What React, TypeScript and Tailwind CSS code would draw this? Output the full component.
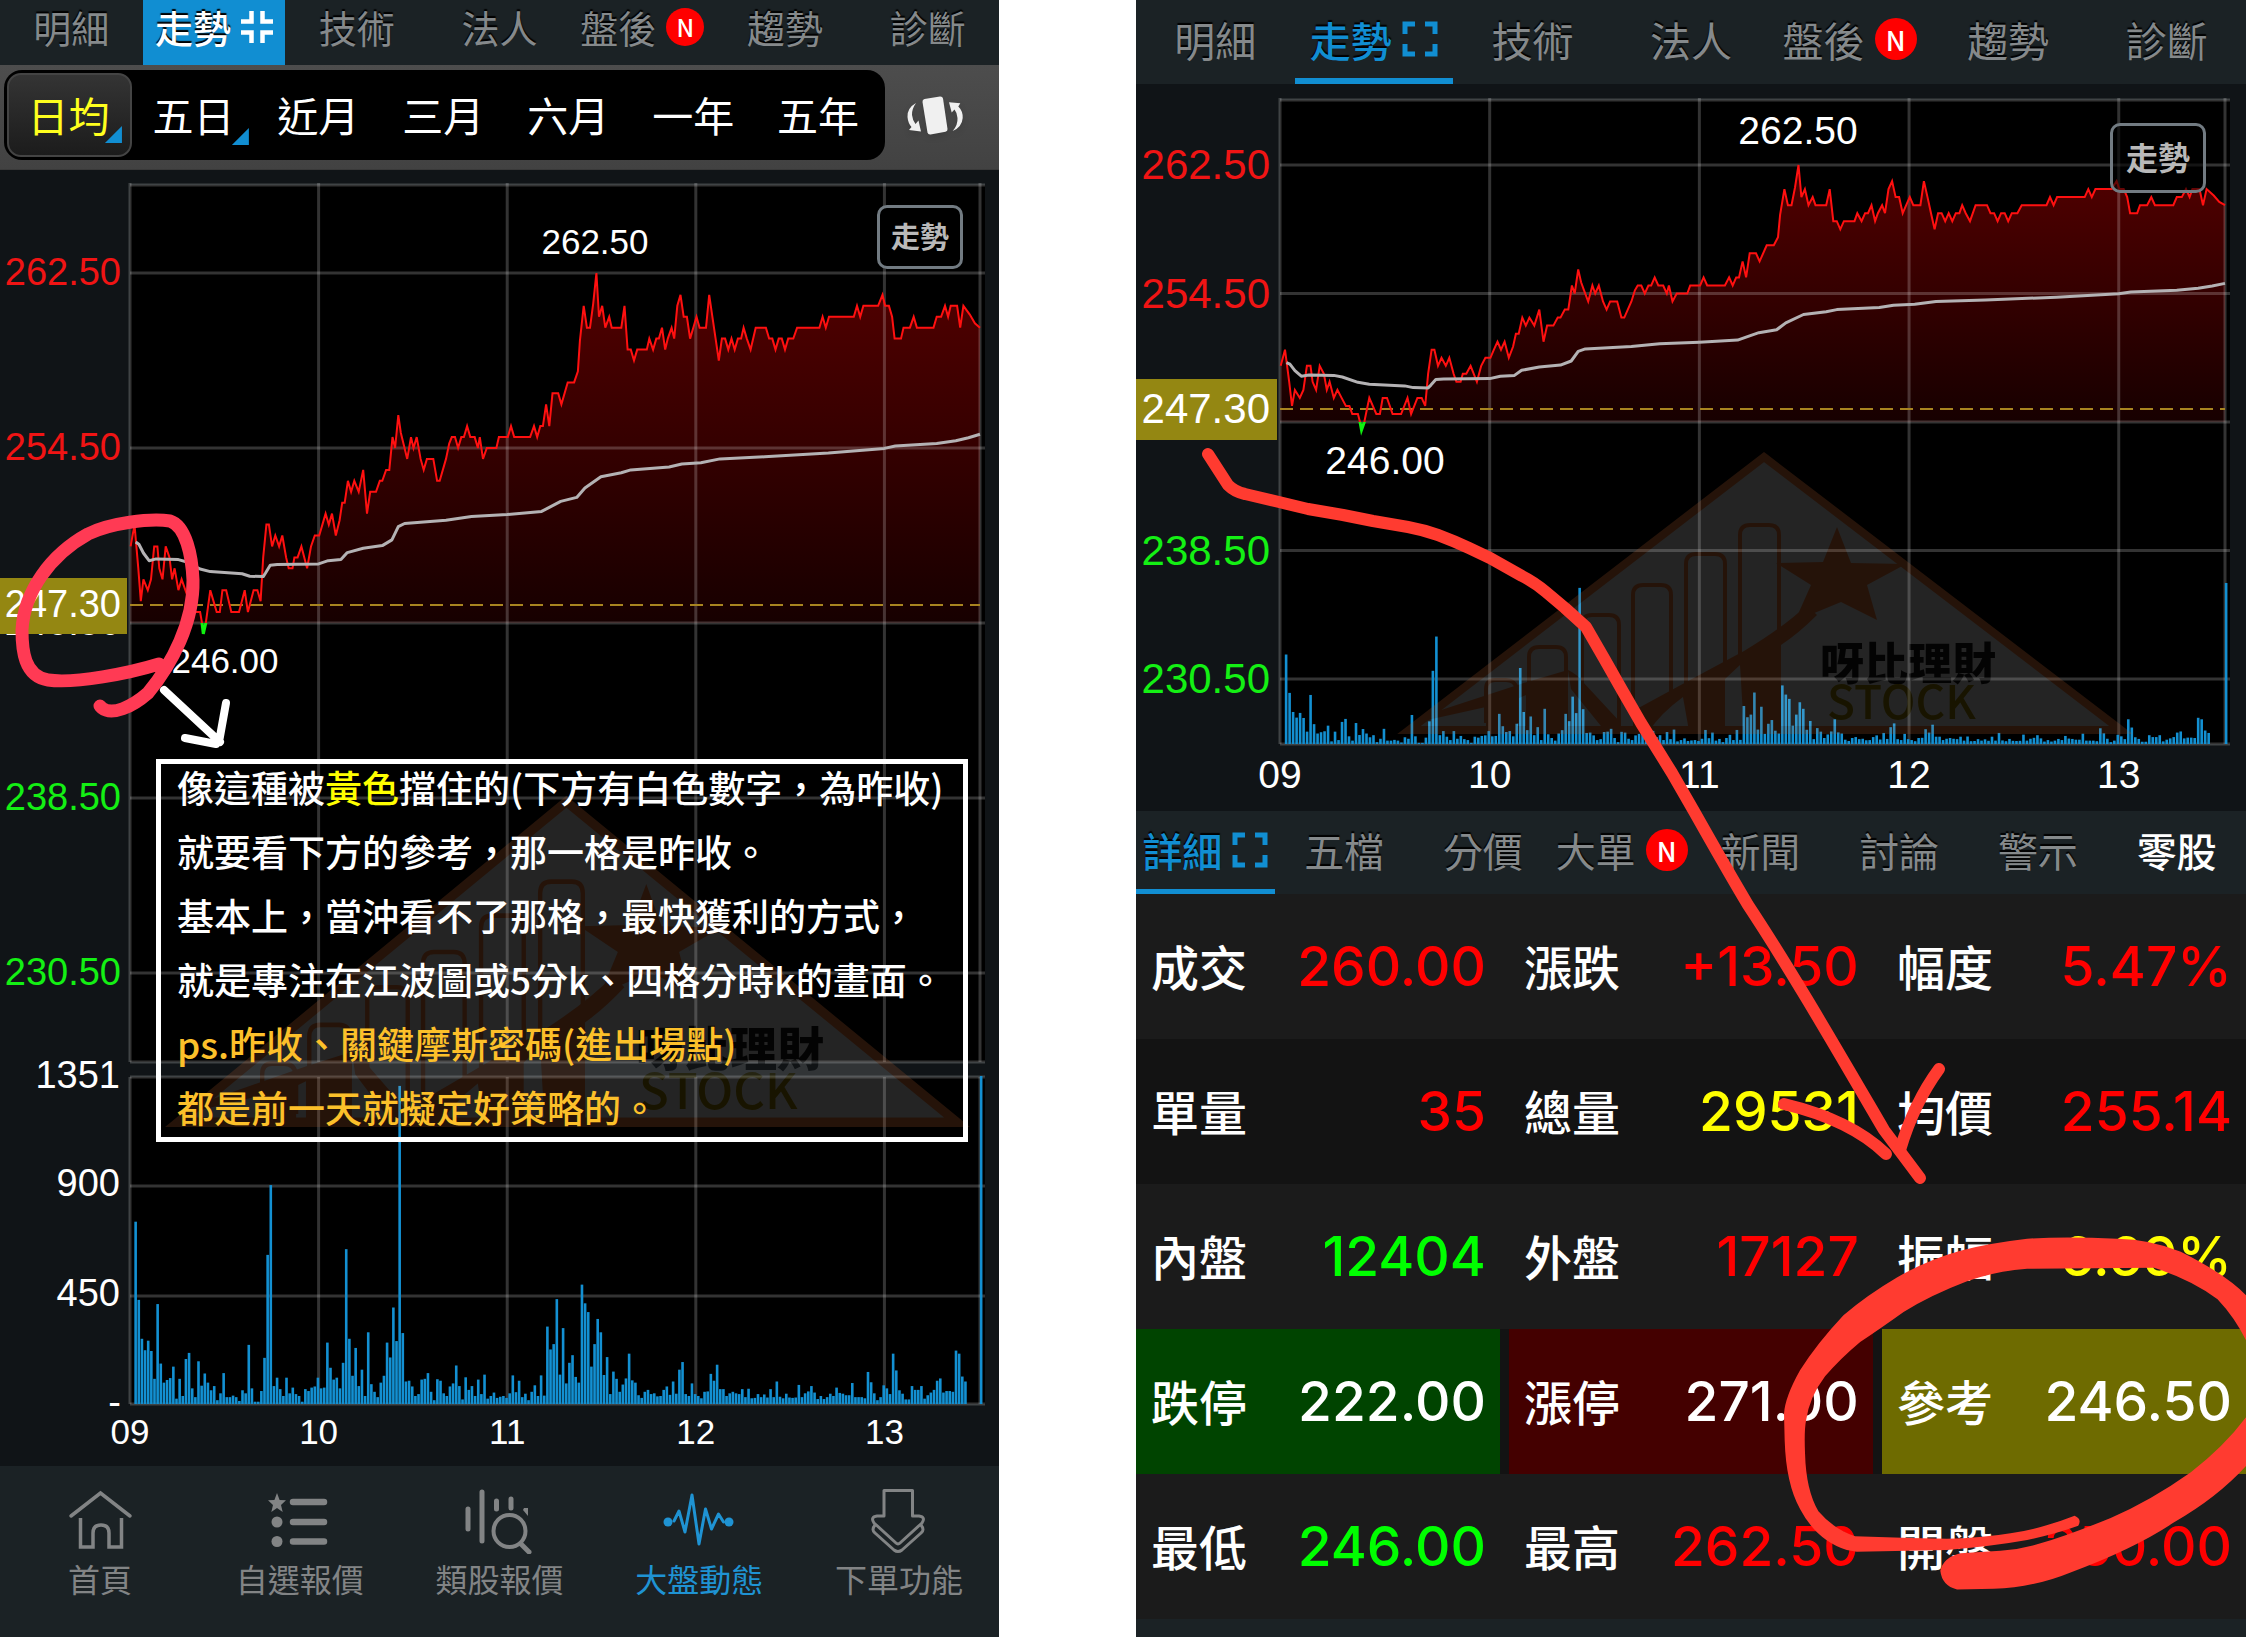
import type { ReactNode } from "react";

/* ---------- market data ---------- */

const TICKS_PER_HOUR = 296;
const SESSION_TICKS = 1334;

const PRICE: [number, number][] = [
  [1, 250], [7, 251], [13, 249], [17, 247.5], [21, 248.5], [28, 248], [33, 248.5], [38, 250], [43, 250], [46, 249],
  [51, 248.5], [56, 250], [62, 249.5], [66, 248.5], [70, 249], [76, 248], [81, 248.5], [87, 248], [93, 247.5], [98, 247.5],
  [102, 247], [110, 247], [113, 246.5], [115, 246], [119, 246.5], [126, 248], [131, 247.5], [136, 247], [141, 247], [145, 248],
  [151, 248], [159, 247], [171, 247], [180, 248], [185, 247], [194, 248], [200, 248], [205, 247.5], [209, 249.5], [214, 251],
  [218, 251], [223, 250], [228, 250.5], [234, 250], [239, 250.5], [245, 249.5], [249, 249], [255, 249], [258, 249.5], [263, 249.5],
  [269, 250], [278, 249], [284, 250], [290, 250.5], [297, 250.5], [302, 251], [307, 251.5], [312, 251], [317, 251.5], [323, 250.5],
  [329, 251.2], [333, 252], [337, 252], [342, 253], [347, 252.5], [352, 253], [359, 252.5], [366, 253.5], [372, 251.5], [377, 252.5],
  [386, 252.5], [392, 253], [396, 253], [402, 253.5], [407, 253.5], [412, 255], [416, 254.5], [421, 256], [425, 255.2], [430, 254.6],
  [435, 254], [441, 255], [445, 254.5], [450, 255], [456, 254], [461, 253.5], [466, 254], [476, 254], [482, 253], [486, 253],
  [496, 254], [501, 254.7], [505, 255], [510, 255], [515, 254.5], [520, 255], [524, 255], [529, 255.5], [534, 255], [541, 255],
  [546, 254.5], [549, 255], [554, 254], [560, 254.5], [575, 254.5], [579, 255], [593, 255], [598, 255.5], [603, 255], [628, 255],
  [634, 255.5], [639, 255], [644, 255.5], [648, 255.5], [653, 256.5], [658, 255.5], [663, 257], [672, 257], [677, 256.5], [687, 257.5],
  [697, 257.5], [703, 258], [706, 259.4], [712, 261], [717, 260], [722, 260], [727, 261.1], [732, 262.5], [736, 260.5], [741, 261],
  [746, 260], [752, 260.5], [756, 260], [771, 260], [776, 261], [781, 259], [786, 259], [791, 258.5], [796, 259], [811, 259],
  [815, 259.5], [821, 259], [826, 259.5], [830, 259.5], [835, 260], [840, 259], [844, 259.5], [850, 260], [854, 259.5], [859, 261],
  [864, 261.5], [869, 260.5], [874, 260.5], [879, 259.5], [884, 260], [889, 260.5], [894, 260], [904, 260], [909, 261.5], [914, 260.5],
  [919, 259.5], [924, 258.5], [929, 259.5], [934, 259.5], [939, 259], [944, 259.5], [949, 259], [954, 259.5], [959, 259.5], [963, 260],
  [968, 259.5], [974, 259], [982, 260], [998, 260], [1003, 259.5], [1008, 259.5], [1013, 259], [1018, 259.5], [1023, 259.5], [1028, 259],
  [1033, 259.5], [1041, 259.5], [1047, 260], [1082, 260], [1087, 260.5], [1092, 260], [1097, 260.5], [1136, 260.5], [1141, 261], [1146, 260.5],
  [1151, 261], [1174, 261], [1181, 261.5], [1185, 261], [1191, 261], [1196, 260.5], [1200, 259.5], [1210, 259.5], [1214, 260], [1224, 260],
  [1230, 260.5], [1235, 260], [1261, 260], [1266, 260.5], [1273, 260.5], [1279, 261], [1284, 260.5], [1288, 261], [1298, 261], [1303, 260],
  [1308, 261], [1318, 260.6], [1326, 260.2], [1334, 260],
];

const AVERAGE: [number, number][] = [
  [9, 250.2], [14, 250.1], [21, 249.7], [30, 249.35], [41, 249.43], [76, 249.4], [88, 249.3], [110, 248.97], [126, 248.85], [176, 248.75],
  [188, 248.64], [209, 248.62], [213, 248.8], [220, 249.14], [231, 249.17], [296, 249.2], [311, 249.35], [331, 249.4], [341, 249.72], [366, 249.92],
  [396, 250.04], [411, 250.3], [421, 250.9], [431, 251.05], [496, 251.2], [536, 251.37], [592, 251.46], [646, 251.6], [661, 251.83], [676, 252.06],
  [701, 252.24], [714, 252.67], [739, 253.19], [771, 253.37], [786, 253.5], [846, 253.63], [866, 253.77], [896, 253.83], [926, 254], [996, 254.1],
  [1096, 254.27], [1184, 254.48], [1201, 254.59], [1266, 254.7], [1296, 254.83], [1316, 254.97], [1334, 255.13],
];

const VOLUME = [
  478, 273, 171, 141, 166, 139, 66, 262, 106, 56, 63, 68, 98, 14, 66, 21, 118, 134, 41, 18, 112, 48, 80, 56, 36, 47, 10, 28, 81, 18,
  18, 22, 18, 8, 36, 28, 155, 41, 6, 6, 34, 121, 391, 574, 47, 69, 39, 21, 69, 28, 43, 26, 21, 6, 39, 34, 43, 46, 69, 41,
  43, 161, 95, 64, 69, 41, 108, 406, 171, 74, 147, 47, 90, 21, 188, 52, 32, 18, 56, 74, 161, 122, 253, 165, 834, 186, 59, 61, 46, 21,
  26, 64, 66, 81, 32, 10, 65, 61, 28, 21, 46, 54, 101, 47, 12, 70, 37, 47, 21, 64, 26, 77, 14, 21, 30, 16, 19, 21, 16, 28,
  75, 31, 61, 18, 27, 10, 32, 49, 21, 75, 22, 203, 143, 157, 275, 77, 199, 54, 108, 128, 71, 56, 313, 264, 241, 98, 157, 223, 188, 76,
  123, 26, 85, 66, 32, 51, 67, 132, 62, 56, 23, 16, 32, 37, 26, 28, 20, 21, 37, 46, 24, 59, 27, 90, 110, 26, 21, 54, 26, 21,
  15, 32, 33, 79, 61, 103, 39, 39, 21, 28, 32, 28, 26, 39, 18, 40, 15, 16, 26, 18, 25, 17, 39, 18, 59, 19, 15, 27, 17, 16,
  17, 50, 18, 28, 33, 47, 30, 13, 21, 13, 18, 27, 21, 43, 29, 27, 23, 23, 55, 18, 18, 18, 15, 84, 57, 28, 10, 18, 49, 41,
  26, 132, 88, 36, 27, 12, 12, 47, 37, 37, 47, 14, 23, 30, 37, 61, 67, 30, 34, 34, 32, 140, 132, 72, 59, 0, 0, 0, 0, 860,
];
const VOLUME_MAX = 860;

/* ---------- chart ---------- */

type ChartConfig = {
  id: string;
  width: number;
  height: number;
  left: number;
  right: number;
  top: number;
  bottom: number;
  y2625: number;
  y2465: number;
  labelRight: number;
  labelSize: number;
  noteSize: number;
  prices: number[];
  tag: { y: number; height: number; width: number };
  peak: [number, number];
  low: [number, number];
  hoursY: number;
  volume: { base: number; full: number; paneTop?: number };
  volumeLabels?: [string, number][];
  mark: { x: number; y: number; w: number; h: number; nameSize: number; name: [number, number]; stock: [number, number] };
};

const LARGE: ChartConfig = {
  id: "large",
  width: 999, height: 1296, left: 130, right: 980, top: 15, bottom: 892,
  y2625: 103, y2465: 453, labelRight: 121, labelSize: 38, noteSize: 35,
  prices: [262.5, 254.5, 246.5, 238.5, 230.5],
  tag: { y: 408, height: 56, width: 127 },
  peak: [595, 84], low: [225, 503], hoursY: 1274,
  volume: { base: 1234, full: 328, paneTop: 907 },
  volumeLabels: [["1351", 907], ["900", 1015], ["450", 1125]],
  mark: { x: 167, y: 627, w: 801, h: 330, nameSize: 47, name: [636, 896], stock: [639, 939] },
};

const SMALL: ChartConfig = {
  id: "small",
  width: 1110, height: 727, left: 144, right: 1089, top: 16, bottom: 660,
  y2625: 81, y2465: 338, labelRight: 134, labelSize: 42, noteSize: 39,
  prices: [262.5, 254.5, 238.5, 230.5],
  tag: { y: 295, height: 61, width: 141 },
  peak: [662, 60], low: [249, 390], hoursY: 704,
  volume: { base: 660, full: 161 },
  mark: { x: 263, y: 369, w: 732, h: 281, nameSize: 44, name: [684, 596], stock: [691, 635] },
};

function Watermark({ m }: { m: ChartConfig["mark"] }) {
  const place = `translate(${m.x} ${m.y}) scale(${m.w / 732} ${m.h / 281})`;
  return (
    <g opacity="0.2">
      <g transform={place} stroke="#b86030" fill="none">
        <path d="M365 0 L732 281 H0 Z" fill="#b4b4b4" stroke="none" />
        <path d="M365 4 L722 277 H10 Z" strokeWidth="8" />
        <g strokeWidth="4">
          <path d="M87 270 V236 Q87 227 96 227 H107 Q116 227 118 236 V270" />
          <path d="M130 240 V204 Q130 194 140 194 H157 Q167 194 167 204 V235" />
          <path d="M183 235 V172 Q183 162 193 162 H210 Q220 162 220 172 V270" />
          <path d="M234 262 V142 Q234 132 244 132 H262 Q272 132 272 142 V245" />
          <path d="M287 235 V111 Q287 101 297 101 H316 Q326 101 326 111 V215" />
          <path d="M341 205 V82 Q341 72 351 72 H370 Q380 72 380 82 V185" />
        </g>
        <g fill="#b86030" stroke="none">
          <path d="M24 268 L30 261 L128 229 L169 217 V278 H127 V242 L118 246 V278 H87 V254 Z" />
          <path d="M169 217 Q178 221 184 229 L222 270 V278 H206 L172 236 Z" />
          <path d="M234 278 V258 Q300 222 345 198 Q385 174 408 152 L418 162 Q400 180 382 192 V278 H345 L341 212 L326 226 V278 H290 L284 244 Q262 260 250 278 Z" />
          <path d="M438 74 L452 110 L507 111 L468 132 L478 167 L442 149 L396 168 L412 132 L377 110 L424 109 Z" />
        </g>
      </g>
      <text x={m.name[0]} y={m.name[1]} fontSize={m.nameSize} fontWeight="900" fill="#111111">呀比理財</text>
      <text x={m.stock[0]} y={m.stock[1]} fontSize={m.nameSize + 2} fontWeight="500" fill="#7a6600">STOCK</text>
    </g>
  );
}

function priceColor(p: number) {
  if (p > 246.5) return "#f01414";
  return p < 246.5 ? "#14f014" : "#ffffff";
}

function Chart({ c }: { c: ChartConfig }) {
  const unit = (c.y2465 - c.y2625) / 16;
  const px = (t: number) => c.left + (t * (c.right - c.left)) / SESSION_TICKS;
  const py = (p: number) => c.y2465 - (p - 246.5) * unit;
  const line = (pts: [number, number][]) => pts.map(([t, p]) => `${px(t).toFixed(1)},${py(p).toFixed(1)}`).join(" ");
  const gridRight = c.right + 5;
  const hours = [0, 1, 2, 3, 4].map((h) => px(h * TICKS_PER_HOUR));
  const half = Math.round(c.labelSize * 0.35) - 1;
  const dashY = c.tag.y + Math.round(c.tag.height / 2) - 1;
  const pane = c.volume.paneTop;

  return (
    <svg viewBox={`0 0 ${c.width} ${c.height}`} className="block h-auto w-full bg-[#101417]" role="img" aria-label="走勢圖">
      <defs>
        <linearGradient id={`${c.id}-fill`} gradientUnits="userSpaceOnUse" x1="0" x2="0" y1={c.y2625} y2={c.y2465}>
          <stop offset="0" stopColor="#520000" />
          <stop offset="1" stopColor="#170000" />
        </linearGradient>
        <clipPath id={`${c.id}-above`}>
          <rect x="0" y="0" width={c.width} height={c.y2465} />
        </clipPath>
        <clipPath id={`${c.id}-below`}>
          <rect x="0" y={c.y2465} width={c.width} height={c.height} />
        </clipPath>
      </defs>

      <rect x={c.left} y={c.top} width={gridRight - c.left} height={c.bottom - c.top} fill="#000000" />
      {pane && <rect x={c.left} y={pane} width={gridRight - c.left} height={c.volume.base - pane} fill="#000000" />}

      <polygon
        clipPath={`url(#${c.id}-above)`}
        points={`${c.left},${c.y2465} ${line(PRICE)} ${c.right},${c.y2465}`}
        fill={`url(#${c.id}-fill)`}
      />

      <g stroke="#ffffff" strokeOpacity="0.2" strokeWidth="3">
        {[...hours, c.right].map((x) => (
          <path key={x} d={`M${x} ${c.top - 2} V${c.bottom}${pane ? ` M${x} ${pane} V${c.volume.base}` : ""}`} />
        ))}
        {[262.5, 254.5, 246.5, 238.5, 230.5].map((p) => (
          <path key={p} d={`M${c.left} ${py(p)} H${gridRight}`} />
        ))}
        <path d={`M${c.left} ${c.top} H${gridRight} M${c.left} ${c.bottom} H${gridRight}`} />
        {pane && (
          <path d={`M${c.left} ${pane} H${gridRight} M${c.left} 1016 H${gridRight} M${c.left} 1126 H${gridRight} M${c.left} ${c.volume.base} H${gridRight}`} />
        )}
      </g>

      <g fill="#1390d2">
        {VOLUME.map((v, i) => {
          const h = (v / VOLUME_MAX) * c.volume.full;
          return <rect key={i} x={px(6.8 + i * 4.933)} y={c.volume.base - h} width="2.6" height={h} />;
        })}
      </g>

      <Watermark m={c.mark} />

      <path d={`M${c.left} ${dashY} H${c.right}`} stroke="#a88420" strokeWidth="2" strokeDasharray="13 7" />
      <polyline points={line(PRICE)} clipPath={`url(#${c.id}-above)`} fill="none" stroke="#ff1010" strokeWidth="2" />
      <polyline points={line(PRICE)} clipPath={`url(#${c.id}-below)`} fill="none" stroke="#10f010" strokeWidth="3" />
      <polyline points={line(AVERAGE)} fill="none" stroke="#b4b2b4" strokeWidth="3" strokeLinejoin="round" />

      <g fontSize={c.labelSize} textAnchor="end" className="font-['Liberation_Sans',sans-serif]">
        {c.prices.map((p) => (
          <text key={p} x={c.labelRight} y={py(p) + half} fill={priceColor(p)}>{p.toFixed(2)}</text>
        ))}
        <rect x="0" y={c.tag.y} width={c.tag.width} height={c.tag.height} fill="#948712" />
        <text x={c.labelRight} y={dashY + half} fill="#ffffff">247.30</text>
        {c.volumeLabels?.map(([t, y]) => (
          <text key={t} x={c.labelRight - 1} y={y + half - 1} fill="#ffffff">{t}</text>
        ))}
        {pane && <text x={c.labelRight} y={c.volume.base + half - 1} fill="#ffffff">-</text>}
      </g>

      <g fontSize={c.noteSize} textAnchor="middle" fill="#ffffff" className="font-['Liberation_Sans',sans-serif]">
        <text x={c.peak[0]} y={c.peak[1]}>262.50</text>
        <text x={c.low[0]} y={c.low[1]}>246.00</text>
        {hours.map((x, i) => (
          <text key={x} x={x} y={c.hoursY}>{["09", "10", "11", "12", "13"][i]}</text>
        ))}
      </g>
    </svg>
  );
}

/* ---------- small parts ---------- */

function Collapse() {
  return (
    <svg viewBox="0 0 32 32" className="size-8" fill="none" stroke="currentColor" strokeWidth="4.500" aria-hidden="true">
      <path d="M0 10.500 H10.500 V0 M32 10.500 H21.500 V0 M0 21.500 H10.500 V32 M32 21.500 H21.500 V32" />
    </svg>
  );
}

function Expand() {
  return (
    <svg viewBox="0 0 36 36" className="size-9" fill="none" stroke="currentColor" strokeWidth="5" aria-hidden="true">
      <path d="M3 13 V3 H13 M23 3 H33 V13 M33 23 V33 H23 M13 33 H3 V23" />
    </svg>
  );
}

function NewBadge({ size }: { size: string }) {
  return (
    <span className={`flex items-center justify-center rounded-full bg-[#ff0000] font-medium text-white [text-shadow:none] ${size}`}>N</span>
  );
}

const DIM = "text-[#85898b] [text-shadow:0_-2px_1px_#000]";

/* ---------- left phone ---------- */

const HEADER = ["明細", "走勢", "技術", "法人", "盤後", "趨勢", "診斷"];
const PERIODS = ["日均", "五日", "近月", "三月", "六月", "一年", "五年"];

function RotateIcon() {
  return (
    <svg viewBox="0 0 60 48" className="h-12 w-15 drop-shadow-md" fill="#f0f0f0" aria-hidden="true">
      <path d="M17.500 6 L33 3.500 Q35.500 3.300 36 5.500 L40.500 36 Q40.800 38.300 38.500 38.800 L23.500 41.500 Q21 41.700 20.500 39.500 L15.500 9 Q15.300 6.500 17.500 6 Z" />
      <path d="M9 10 Q0 15 0.500 24 Q1 30 4.500 34 L2 37 L14 38.500 L11.500 27.500 L8.500 31 Q5.500 27 5 22 Q4.700 16 9 10 Z" />
      <path d="M42 9.300 L53.300 10.300 L51.300 13.500 Q56 18 55.700 25 Q55 34 45.700 38 Q51 32 50.500 25 Q50.300 20 47.500 16.500 L44.700 19.500 Z" />
    </svg>
  );
}

const NAV: { label: string; icon: ReactNode; on?: boolean }[] = [
  {
    label: "首頁",
    icon: (
      <g strokeWidth="3.5">
        <path d="M7 28 L36.5 5 L66 28" strokeLinecap="round" />
        <path d="M16.5 30 V59 H29 V45 Q29 37 37 37 Q45 37 45 45 V59 H57.500 V30" />
      </g>
    ),
  },
  {
    label: "自選報價",
    icon: (
      <g>
        <path d="M29 14 H60 M29 34 H60 M29 53.500 H60" strokeWidth="6.5" strokeLinecap="round" />
        <path d="M13 5 L15.600 12 L22 12.300 L17 17 L18.700 24 L13 20 L7.300 24 L9 17 L4 12.300 L10.400 12 Z" fill="currentColor" stroke="none" />
        <circle cx="13" cy="34" r="5.500" fill="currentColor" stroke="none" />
        <circle cx="13" cy="53.500" r="5.500" fill="currentColor" stroke="none" />
      </g>
    ),
  },
  {
    label: "類股報價",
    icon: (
      <g strokeWidth="5" strokeLinecap="round">
        <path d="M5 21 V41 M19 4 V53 M33.500 13 V21 M48 11 V20" />
        <path d="M61 20 H65 V28 L60 22 Z" fill="currentColor" stroke="none" />
        <circle cx="46.500" cy="43" r="16" strokeWidth="4" />
        <path d="M58 56 L66 64" />
      </g>
    ),
  },
  {
    label: "大盤動態",
    on: true,
    icon: (
      <g strokeWidth="3" strokeLinejoin="round" strokeLinecap="round">
        <path d="M11 33 L16 23 L22 44 L29 7 L36 56 L42.500 21 L48.500 41 L55.500 26 L60.500 34" />
        <circle cx="5" cy="34" r="4.500" fill="currentColor" stroke="none" />
        <circle cx="66" cy="34" r="4.500" fill="currentColor" stroke="none" />
      </g>
    ),
  },
  {
    label: "下單功能",
    icon: (
      <g strokeWidth="3" strokeLinejoin="round">
        <path d="M21 2.500 H49.500 V28 H56 Q63 29 59 35 L37 55 Q35 57 33 55 L11 35 Q7 29 14 28 H21 Z" />
        <path d="M12 37 Q8 42 12 45 L31 62 Q35 65 39 62 L58 45 Q62 42 58 37" />
      </g>
    ),
  },
];

function LeftPhone() {
  return (
    <section className="relative flex flex-col overflow-hidden bg-[#1b2225]">
      <nav className="grid h-[65px] grid-cols-7 text-[38px] leading-none">
        {HEADER.map((t) => (
          <button
            key={t}
            type="button"
            className={`flex items-center justify-center gap-2.5 pb-3 whitespace-nowrap ${t === "走勢" ? "bg-[#118ed2] font-medium text-white [text-shadow:0_-2px_1px_#000]" : DIM}`}
          >
            {t}
            {t === "走勢" && <Collapse />}
            {t === "盤後" && <NewBadge size="size-[38px] text-2xl" />}
          </button>
        ))}
      </nav>

      <div className="flex h-[105px] items-center border-b border-[#3a3a3a] bg-linear-to-b from-[#4d4d4d] to-[#424242] pb-1 pl-1">
        <div className="grid h-[90px] w-[88.5%] grid-cols-7 rounded-[18px] bg-black p-[3px]">
          {PERIODS.map((t, i) => (
            <button
              key={t}
              type="button"
              className={`relative rounded-[14px] pr-0.5 pb-0.5 text-[41px] leading-none ${i === 0 ? "border-2 border-[#444] bg-linear-to-b from-[#343434] to-[#1c1c1c] text-[#ffff1e]" : "text-white"}`}
            >
              {t}
              {i < 2 && (
                <span className="absolute right-2 bottom-3 size-[17px] bg-[#118ed2] [clip-path:polygon(100%_0,100%_100%,0_100%)]" />
              )}
            </button>
          ))}
        </div>
        <button type="button" aria-label="旋轉" className="ml-[22px] pt-1">
          <RotateIcon />
        </button>
      </div>

      <div className="relative">
        <Chart c={LARGE} />
        <button
          type="button"
          className="absolute top-[35px] right-[36px] h-16 w-[86px] rounded-[10px] border-3 border-[#727b82] bg-black pb-1 text-[29px] leading-none font-bold text-[#b9b9b9]"
        >
          走勢
        </button>
        <div className="absolute top-[589px] right-[31px] flex h-[383px] w-[812px] flex-col justify-center border-5 border-white pb-2 pl-4 text-[37px] leading-[64px] font-medium whitespace-nowrap text-white">
          <p>
            像這種被<span className="text-[#ffff00]">黃色</span>擋住的(下方有白色數字，為昨收)
          </p>
          <p>就要看下方的參考，那一格是昨收。</p>
          <p>基本上，當沖看不了那格，最快獲利的方式，</p>
          <p>就是專注在江波圖或5分k、四格分時k的畫面。</p>
          <p className="text-[#fcc02a]">ps.昨收、關鍵摩斯密碼(進出場點)</p>
          <p className="text-[#fcc02a]">都是前一天就擬定好策略的。</p>
        </div>
      </div>

      <nav className="grid grow grid-cols-5 text-[32px] leading-none">
        {NAV.map((n) => (
          <a key={n.label} href="#" className={`flex flex-col items-center gap-2 pt-[22px] ${n.on ? "text-[#1f93d3]" : "text-[#828485]"}`}>
            <svg viewBox="0 0 72 66" className="h-[66px] w-[72px]" fill="none" stroke="currentColor" aria-hidden="true">
              {n.icon}
            </svg>
            {n.label}
          </a>
        ))}
      </nav>

      <svg viewBox="0 0 999 1637" className="pointer-events-none absolute inset-x-0 top-0 h-auto w-full" fill="none" strokeLinecap="round" strokeLinejoin="round" aria-hidden="true">
        <path
          d="M159 664 C130 673 75 684 48 680 C24 676 22 650 22 630 C24 592 50 555 88 534 C110 523 150 518 170 521 C186 526 192 556 193 580 C194 622 172 664 148 693 C132 707 112 716 102 708 L100 706"
          stroke="#ff3a54"
          strokeWidth="13"
        />
        <path d="M164 690 L220 742 M226 703 L219 742 M185 738 L216 744" stroke="#ffffff" strokeWidth="8" />
      </svg>
    </section>
  );
}

/* ---------- right phone ---------- */

const SUBTABS = ["詳細", "五檔", "分價", "大單", "新聞", "討論", "警示", "零股"];

const RED = "text-[#ff0000]";
const GREEN = "text-[#00ff00]";
const YELLOW = "text-[#ffff00]";
const WHITE = "text-white";

const QUOTES: [string, string, string][][] = [
  [["成交", "260.00", RED], ["漲跌", "+13.50", RED], ["幅度", "5.47%", RED]],
  [["單量", "35", RED], ["總量", "29531", YELLOW], ["均價", "255.14", RED]],
  [["內盤", "12404", GREEN], ["外盤", "17127", RED], ["振幅", "6.69%", YELLOW]],
  [["跌停", "222.00", WHITE], ["漲停", "271.00", WHITE], ["參考", "246.50", WHITE]],
  [["最低", "246.00", GREEN], ["最高", "262.50", RED], ["開盤", "250.00", RED]],
];

const LIMIT_BG = ["bg-[#004400]", "bg-[#440000]", "bg-[#6e6b00]"];

function QuoteTable() {
  return (
    <table className="w-full table-fixed border-collapse text-[48px] leading-none">
      <colgroup>
        <col className="w-[11.7%]" />
        <col className="w-[21.9%]" />
        <col className="w-[11.7%]" />
        <col className="w-[21.9%]" />
        <col className="w-[11.7%]" />
        <col className="w-[21.1%]" />
      </colgroup>
      <tbody>
        {QUOTES.map((row, r) => (
          <tr key={r} className={r % 2 ? "bg-[#131313]" : "bg-[#1b1b1b]"}>
            {row.map(([label, value, color], i) => {
              const fill = r === 3 ? LIMIT_BG[i] : "";
              return [
                <th key={label} scope="row" className={`pb-1 pl-[15px] text-left font-medium whitespace-nowrap text-white ${fill}`}>
                  {label}
                </th>,
                <td key={label + "v"} className="p-0">
                  <div className={`flex h-[145px] items-center justify-end pr-[14px] font-['Inter',sans-serif] text-[55px] font-medium whitespace-nowrap ${i < 2 ? "mr-[9px]" : ""} ${color} ${fill}`}>
                    {value}
                  </div>
                </td>,
              ];
            })}
          </tr>
        ))}
      </tbody>
    </table>
  );
}

function RightPhone() {
  return (
    <section className="relative flex flex-col overflow-hidden bg-[#1b2225]">
      <nav className="grid h-[84px] grid-cols-7 text-[41px] leading-none">
        {HEADER.map((t) => (
          <button
            key={t}
            type="button"
            className={`flex items-center justify-center gap-2.5 border-b-6 whitespace-nowrap ${t === "走勢" ? "border-[#118ed2] font-medium text-[#118ed2] [text-shadow:0_-2px_1px_#000]" : `border-transparent ${DIM}`}`}
          >
            {t}
            {t === "走勢" && <Expand />}
            {t === "盤後" && <NewBadge size="size-[42px] text-[27px]" />}
          </button>
        ))}
      </nav>

      <div className="relative">
        <Chart c={SMALL} />
        <button
          type="button"
          className="absolute top-[39px] right-[40px] h-[70px] w-24 rounded-[10px] border-3 border-[#727b82] bg-black/60 pb-1 text-[32px] leading-none font-bold text-[#b9b9b9]"
        >
          走勢
        </button>
      </div>

      <nav className="grid h-[83px] grid-cols-8 text-[40px] leading-none">
        {SUBTABS.map((t, i) => (
          <button
            key={t}
            type="button"
            className={`flex items-center justify-center gap-2.5 border-b-5 whitespace-nowrap ${
              i === 0
                ? "border-[#118ed2] font-medium text-[#118ed2] [text-shadow:0_-2px_1px_#000]"
                : i === 7
                  ? "border-transparent font-medium text-white"
                  : `border-transparent ${DIM}`
            }`}
          >
            {t}
            {i === 0 && <Expand />}
            {i === 3 && <NewBadge size="size-[42px] text-[27px]" />}
          </button>
        ))}
      </nav>

      <QuoteTable />

      <svg viewBox="0 0 1110 1637" className="pointer-events-none absolute inset-x-0 top-0 h-auto w-full" fill="none" strokeLinecap="round" strokeLinejoin="round" aria-hidden="true">
        <g stroke="#ff3b30" strokeWidth="12">
          <path d="M72 454 L92 485 Q99 492 109 494 L143 502 L172 509 L207 515 L237 521 L272 527 Q288 530 302 535 Q318 541 333 548 L354 558 L386 576 Q398 582 410 592 L429 608 L450 627 L469 660 L486 690 L505 723 L536 773 L559 813 Q590 868 612 905 C655 970 700 1048 748 1130 L784 1178" />
          <path d="M803 1069 Q778 1103 764 1150 M648 1104 Q715 1120 750 1154" />
        </g>
        <g transform="translate(644 1200) scale(0.334)" fill="#ff3b30">
          <path d="M882 945 Q780 985 690 998 Q600 1013 500 1014 L390 1012 L225 1007 Q160 985 115 932 Q78 870 75 760 Q72 690 78 660 Q88 590 135 528 Q180 475 240 425 Q300 385 370 335 Q450 285 560 243 Q650 212 740 206 L1120 203 Q1230 238 1310 297 Q1365 355 1400 430 V290 Q1340 225 1200 155 Q1110 118 1010 116 Q850 108 740 116 Q620 130 540 152 Q440 180 350 232 Q260 285 190 345 Q110 430 60 510 Q15 590 12 640 L14 720 Q18 850 60 925 Q110 1020 200 1048 L230 1053 L500 1048 Q640 1036 740 1018 Q830 998 893 975 Q905 955 882 945 Z" />
          <path d="M1410 630 Q1340 730 1230 815 Q1110 900 990 952 Q860 1005 780 1028 Q720 1047 660 1050 L540 1058 Q490 1070 480 1110 Q485 1155 530 1166 L640 1164 Q760 1160 870 1115 Q1060 1045 1180 965 Q1320 885 1410 780 Z" />
        </g>
      </svg>
    </section>
  );
}

export default function App() {
  return (
    <main className="grid min-h-screen grid-cols-[999fr_137fr_1110fr_5fr] bg-white font-['Noto_Sans_CJK_TC',sans-serif]">
      <LeftPhone />
      <div />
      <RightPhone />
    </main>
  );
}
